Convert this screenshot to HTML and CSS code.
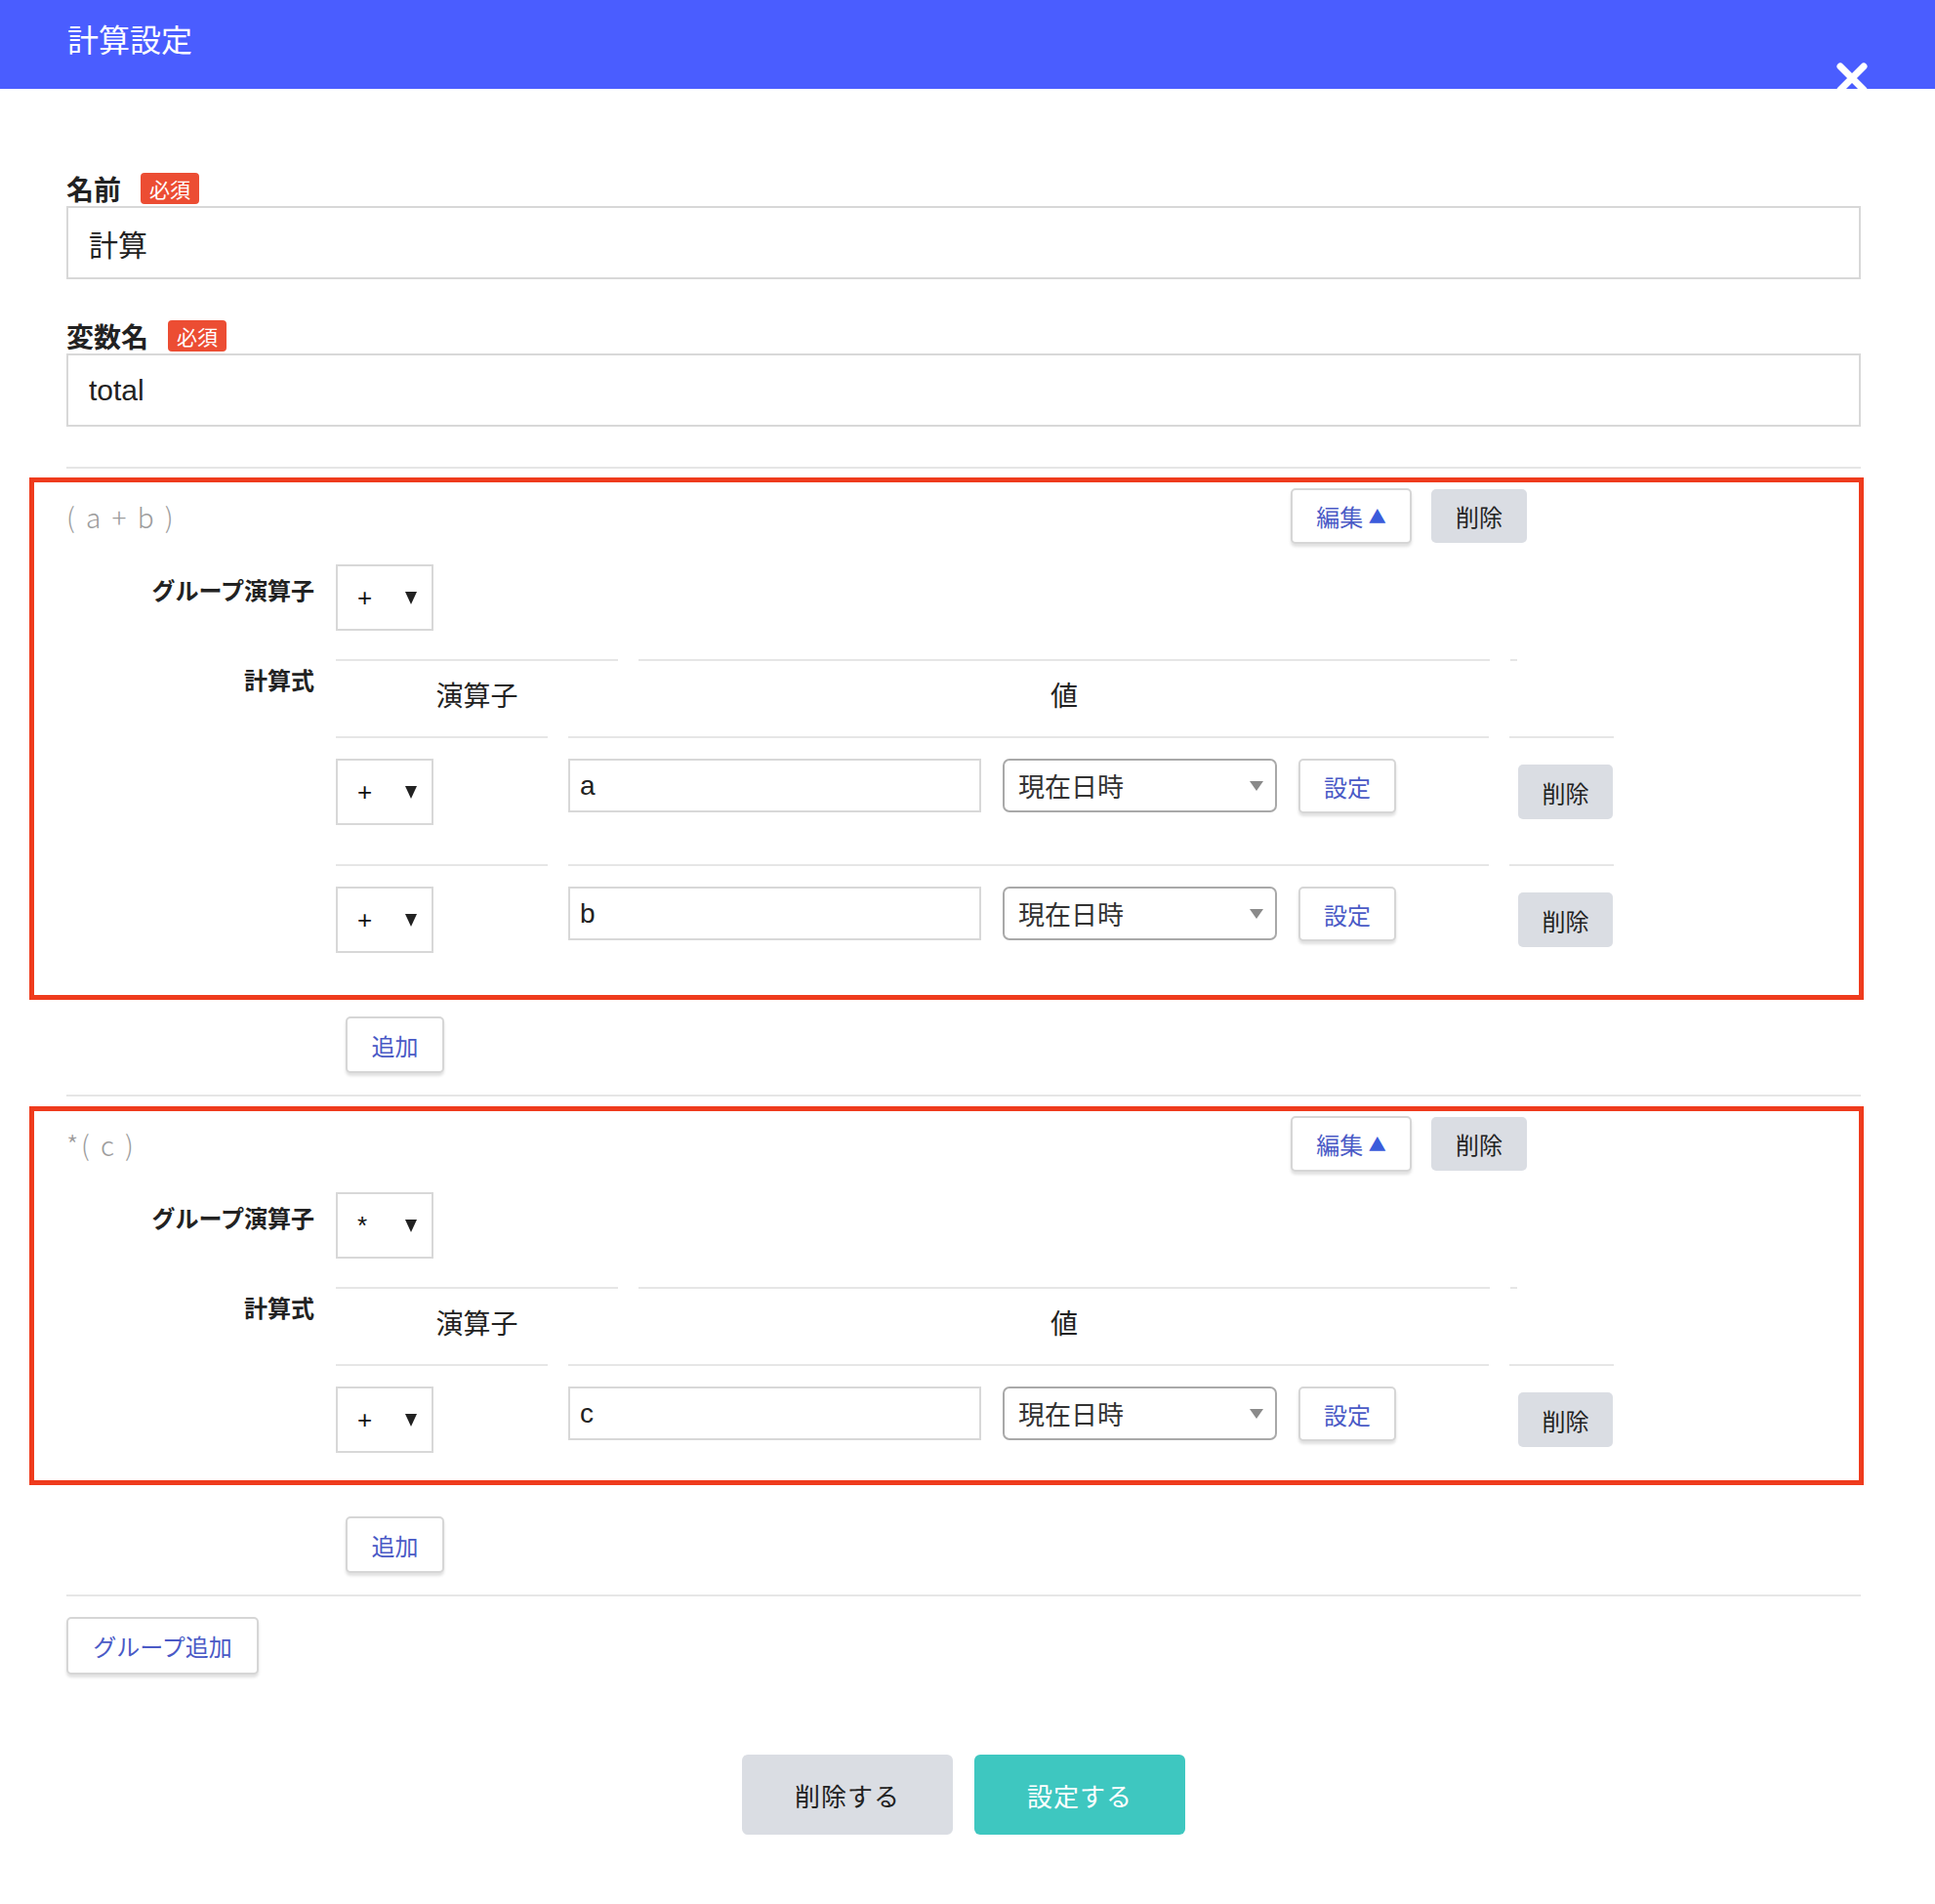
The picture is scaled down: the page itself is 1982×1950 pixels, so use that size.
FILE: index.html
```html
<!DOCTYPE html>
<html lang="ja">
<head>
    <meta charset="UTF-8">
    <title>計算設定</title>
    <link rel="stylesheet" href="styles.css">
</head>
<body>
    <div class="modal-header">
        <h1 class="modal-title">計算設定</h1>
        <button class="close-btn" aria-label="close">
            <svg width="34" height="34" viewBox="0 0 34 34">
                <path d="M5 5 L29 29 M29 5 L5 29" stroke="#fff" stroke-width="7" stroke-linecap="round" fill="none"/>
            </svg>
        </button>
    </div>

    <div class="modal-body">
        <div class="field">
            <div class="field-label">名前<span class="badge">必須</span></div>
            <input class="text-input" type="text" value="計算">
        </div>
        <div class="field">
            <div class="field-label">変数名<span class="badge">必須</span></div>
            <input class="text-input" type="text" value="total">
        </div>

        <hr class="divider">

        <!-- group 1 -->
        <div class="group">
            <div class="mark mark-first"></div>
            <div class="group-head">
                <span class="group-title">( a + b )</span>
                <div class="group-actions">
                    <button class="btn btn-outline btn-edit">編集 <span class="tri-up">▲</span></button>
                    <button class="btn btn-gray btn-head-del">削除</button>
                </div>
            </div>
            <div class="form-row">
                <div class="row-label">グループ演算子</div>
                <div class="op-select"><span>+</span><span class="caret"></span></div>
            </div>
            <div class="form-row form-row-formula">
                <div class="row-label">計算式</div>
                <div class="formula">
                    <div class="formula-head">
                        <div>演算子</div>
                        <div>値</div>
                        <div></div>
                    </div>
                    <div class="formula-row">
                        <div class="cell"><div class="op-select"><span>+</span><span class="caret"></span></div></div>
                        <div class="cell value-cell">
                            <input class="val-input" type="text" value="a">
                            <div class="val-select">現在日時<span class="caret-gray"></span></div>
                            <button class="btn btn-outline btn-set">設定</button>
                        </div>
                        <div class="cell"><button class="btn btn-gray btn-row-del">削除</button></div>
                    </div>
                    <div class="formula-row">
                        <div class="cell"><div class="op-select"><span>+</span><span class="caret"></span></div></div>
                        <div class="cell value-cell">
                            <input class="val-input" type="text" value="b">
                            <div class="val-select">現在日時<span class="caret-gray"></span></div>
                            <button class="btn btn-outline btn-set">設定</button>
                        </div>
                        <div class="cell"><button class="btn btn-gray btn-row-del">削除</button></div>
                    </div>
                </div>
            </div>
        </div>
        <div class="add-row"><button class="btn btn-outline btn-add">追加</button></div>

        <hr class="divider divider-tight">

        <!-- group 2 -->
        <div class="group">
            <div class="mark mark-second"></div>
            <div class="group-head">
                <span class="group-title">*( c )</span>
                <div class="group-actions">
                    <button class="btn btn-outline btn-edit">編集 <span class="tri-up">▲</span></button>
                    <button class="btn btn-gray btn-head-del">削除</button>
                </div>
            </div>
            <div class="form-row">
                <div class="row-label">グループ演算子</div>
                <div class="op-select"><span>*</span><span class="caret"></span></div>
            </div>
            <div class="form-row form-row-formula">
                <div class="row-label">計算式</div>
                <div class="formula">
                    <div class="formula-head">
                        <div>演算子</div>
                        <div>値</div>
                        <div></div>
                    </div>
                    <div class="formula-row">
                        <div class="cell"><div class="op-select"><span>+</span><span class="caret"></span></div></div>
                        <div class="cell value-cell">
                            <input class="val-input" type="text" value="c">
                            <div class="val-select">現在日時<span class="caret-gray"></span></div>
                            <button class="btn btn-outline btn-set">設定</button>
                        </div>
                        <div class="cell"><button class="btn btn-gray btn-row-del">削除</button></div>
                    </div>
                </div>
            </div>
        </div>
        <div class="add-row"><button class="btn btn-outline btn-add">追加</button></div>

        <hr class="divider divider-tight">

        <button class="btn btn-outline btn-group-add">グループ追加</button>

        <div class="footer-actions">
            <button class="btn btn-gray btn-footer">削除する</button>
            <button class="btn btn-teal btn-footer">設定する</button>
        </div>
    </div>
</body>
</html>
```

FILE: styles.css
```css
/* Base */
* {
    box-sizing: border-box;
}

body {
    margin: 0;
    font-family: "Noto Sans CJK JP", sans-serif;
    color: #222;
    background: #fff;
}

/* Header bar */
.modal-header {
    position: relative;
    height: 91px;
    background: #4a5dff;
    padding: 0 69px;
}

.modal-title {
    margin: 0;
    font-size: 32px;
    font-weight: 400;
    line-height: 78px;
    color: #fff;
}

.close-btn {
    position: absolute;
    top: 63px;
    right: 68px;
    width: 34px;
    height: 34px;
    padding: 0;
    border: 0;
    background: none;
}

.close-btn svg {
    display: block;
}

/* Body */
.modal-body {
    padding: 86px 76px 0 68px;
}

.field + .field {
    margin-top: 42px;
}

.field-label {
    display: flex;
    align-items: center;
    gap: 20px;
    height: 32px;
    font-size: 28px;
    font-weight: 700;
    line-height: 32px;
}

.badge {
    height: 32px;
    padding: 0 9px;
    border-radius: 4px;
    background: #ec4d33;
    color: #fff;
    font-size: 21px;
    font-weight: 400;
    line-height: 32px;
}

.text-input {
    display: block;
    width: 100%;
    height: 75px;
    margin: 2px 0 0;
    padding: 0 21px;
    border: 2px solid #d8d8d8;
    font-family: "Liberation Sans", "Noto Sans CJK JP", sans-serif;
    font-size: 30px;
    color: #222;
    outline: none;
}

.divider {
    margin: 41px 0 0;
    border: 0;
    border-top: 2px solid #e6e6e6;
}

.divider-tight {
    margin-top: 22px;
}

/* Calculation group */
.group {
    position: relative;
}

.mark {
    position: absolute;
    left: -38px;
    right: -3px;
    border: 5px solid #ef3b1d;
    pointer-events: none;
}

.mark-first {
    top: 9px;
    bottom: -8px;
}

.mark-second {
    top: 10px;
    bottom: 7px;
}

.group-head {
    display: flex;
    align-items: center;
    padding: 20px 342px 0 0;
}

.group-title {
    font-size: 28px;
    font-weight: 300;
    letter-spacing: 2.5px;
    color: #9c9c9c;
}

.group-actions {
    display: flex;
    align-items: center;
    gap: 20px;
    margin-left: auto;
}

.form-row {
    display: flex;
    align-items: flex-start;
    gap: 22px;
    margin-top: 21px;
}

.form-row-formula {
    margin-top: 29px;
}

.row-label {
    flex: none;
    width: 254px;
    padding-top: 10px;
    text-align: right;
    font-size: 24px;
    font-weight: 700;
    line-height: 32px;
}

.form-row-formula .row-label {
    padding-top: 5px;
}

/* Operator dropdown */
.op-select {
    display: flex;
    align-items: center;
    width: 100px;
    height: 68px;
    padding-left: 20px;
    border: 2px solid #d8d8d8;
    font-family: "Liberation Sans", sans-serif;
    font-size: 26px;
    color: #111;
}

.caret {
    width: 0;
    height: 0;
    margin-left: auto;
    margin-right: 15px;
    border-left: 6px solid transparent;
    border-right: 6px solid transparent;
    border-top: 13px solid #222;
}

/* Formula table */
.formula-head {
    display: grid;
    grid-template-columns: 289px 872px 7px;
    column-gap: 21px;
}

.formula-head > div {
    display: flex;
    align-items: center;
    justify-content: center;
    height: 79px;
    padding-bottom: 10px;
    border-top: 2px solid #e6e6e6;
    font-size: 28px;
}

.formula-row {
    display: grid;
    grid-template-columns: 217px 943px 107px;
    column-gap: 21px;
}

.formula-row .cell {
    padding: 21px 0 40px;
    border-top: 2px solid #e6e6e6;
}

.value-cell {
    display: flex;
    align-items: flex-start;
    gap: 22px;
}

.val-input {
    width: 423px;
    height: 55px;
    margin: 0;
    padding: 0 10px;
    border: 2px solid #d8d8d8;
    font-family: "Liberation Sans", sans-serif;
    font-size: 28px;
    color: #222;
    outline: none;
}

.val-select {
    display: flex;
    align-items: center;
    width: 281px;
    height: 55px;
    padding: 0 12px 0 14px;
    border: 2px solid #a9a9a9;
    border-radius: 7px;
    font-size: 27px;
    color: #333;
}

.caret-gray {
    width: 0;
    height: 0;
    margin-left: auto;
    border-left: 7px solid transparent;
    border-right: 7px solid transparent;
    border-top: 10px solid #8a8a8a;
}

/* Buttons */
.btn {
    padding: 0;
    border-radius: 5px;
    font-family: "Noto Sans CJK JP", sans-serif;
    font-size: 24px;
    cursor: pointer;
}

.btn-outline {
    background: #fff;
    border: 2px solid #d6d6d6;
    color: #4a5ac6;
    box-shadow: 0 3px 3px rgba(0, 0, 0, 0.12);
}

.btn-gray {
    background: #dadde3;
    border: 0;
    color: #222;
}

.btn-teal {
    background: #3ec7c0;
    border: 0;
    color: #fff;
}

.btn-edit {
    width: 124px;
    height: 57px;
}

.tri-up {
    font-size: 18px;
    color: #3b5bdb;
    vertical-align: 3px;
}

.btn-head-del {
    width: 98px;
    height: 55px;
}

.btn-set {
    width: 100px;
    height: 56px;
}

.btn-row-del {
    width: 97px;
    height: 56px;
    margin: 6px 0 0 9px;
}

.add-row {
    padding: 25px 0 0 286px;
}

.btn-add {
    width: 101px;
    height: 58px;
}

.btn-group-add {
    width: 197px;
    height: 59px;
    margin-top: 21px;
}

/* Footer */
.footer-actions {
    display: flex;
    justify-content: center;
    gap: 22px;
    margin-top: 82px;
}

.btn-footer {
    width: 216px;
    height: 82px;
    border-radius: 6px;
    font-size: 26px;
    letter-spacing: 1px;
}
```
